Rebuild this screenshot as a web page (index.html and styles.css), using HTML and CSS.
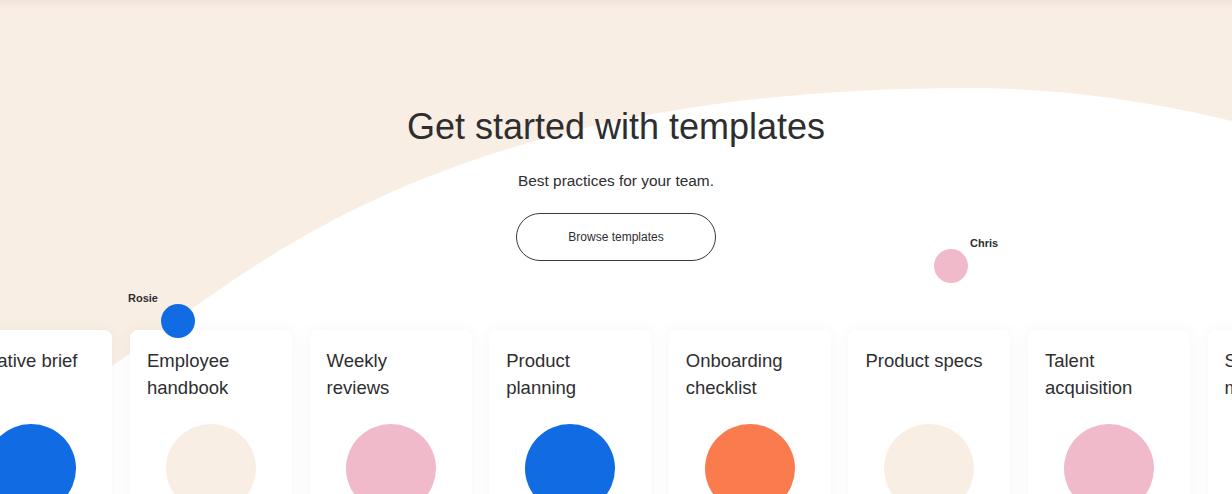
FILE: index.html
```html
<!DOCTYPE html>
<html lang="en">
<head>
<meta charset="utf-8">
<title>Get started with templates</title>
<link rel="stylesheet" href="styles.css">
</head>
<body>
<section class="templates">
  <svg class="backdrop" width="1232" height="494" viewBox="0 0 1232 494" preserveAspectRatio="none" aria-hidden="true">
    <rect x="0" y="0" width="1232" height="494" fill="#f9eee4"/>
    <path d="M0,438 L110,367 C235,286 420,88 970,88 C1080,88 1180,108 1232,121 L1232,494 L0,494 Z" fill="#ffffff"/>
  </svg>
  <div class="topshade"></div>

  <div class="hero">
    <h1 class="hero-title">Get started with templates</h1>
    <p class="hero-sub">Best practices for your team.</p>
    <button class="hero-btn" type="button">Browse templates</button>
  </div>

  <div class="cursor cursor-rosie">
    <span class="cursor-name">Rosie</span>
    <span class="cursor-dot dot-blue"></span>
  </div>
  <div class="cursor cursor-chris">
    <span class="cursor-dot dot-pink"></span>
    <span class="cursor-name">Chris</span>
  </div>

  <div class="cards">
    <div class="card"><div class="card-title">Creative brief</div><div class="card-art blue"></div></div>
    <div class="card"><div class="card-title">Employee handbook</div><div class="card-art beige"></div></div>
    <div class="card"><div class="card-title">Weekly reviews</div><div class="card-art pink"></div></div>
    <div class="card"><div class="card-title">Product planning</div><div class="card-art blue"></div></div>
    <div class="card"><div class="card-title">Onboarding checklist</div><div class="card-art orange"></div></div>
    <div class="card"><div class="card-title">Product specs</div><div class="card-art beige"></div></div>
    <div class="card"><div class="card-title">Talent acquisition</div><div class="card-art pink"></div></div>
    <div class="card"><div class="card-title">Sprint management</div><div class="card-art orange"></div></div>
  </div>
</section>
</body>
</html>
```

FILE: styles.css
```css
html, body {
  margin: 0;
  padding: 0;
  background: #ffffff;
  overflow: hidden;
}

body {
  font-family: "Liberation Sans", Arial, Helvetica, sans-serif;
  color: #2e2e30;
}

.templates {
  position: relative;
  width: 1232px;
  height: 494px;
  overflow: hidden;
}

.backdrop {
  position: absolute;
  left: 0;
  top: 0;
  z-index: 0;
}

.topshade {
  position: absolute;
  left: 0;
  top: 0;
  width: 100%;
  height: 9px;
  background: linear-gradient(to bottom, rgba(120, 90, 60, 0.06), rgba(120, 90, 60, 0));
  z-index: 1;
}

.hero {
  position: relative;
  z-index: 2;
  display: flex;
  flex-direction: column;
  align-items: center;
  padding-top: 105px;
}

.hero-title {
  margin: 0;
  font-size: 36px;
  line-height: 44px;
  font-weight: 400;
  color: #2e2e30;
  letter-spacing: 0;
}

.hero-sub {
  margin: 22px 0 0;
  font-size: 15.4px;
  line-height: 20px;
  color: #2e2e30;
}

.hero-btn {
  margin-top: 22px;
  width: 200px;
  height: 48px;
  border: 1px solid #3a3a3c;
  border-radius: 24px;
  background: #ffffff;
  font-family: "Liberation Sans", Arial, Helvetica, sans-serif;
  font-size: 12px;
  color: #2e2e30;
  padding: 0;
  cursor: pointer;
}

.cursor {
  position: absolute;
  z-index: 4;
  display: flex;
}

.cursor-name {
  font-size: 11px;
  font-weight: 700;
  line-height: 13px;
  color: #2e2e30;
}

.cursor-dot {
  width: 34px;
  height: 34px;
  border-radius: 50%;
}

.cursor-rosie {
  left: 128px;
  top: 292px;
  align-items: flex-start;
}

.cursor-rosie .cursor-dot {
  margin-top: 12px;
  margin-left: 3px;
}

.cursor-chris {
  left: 934px;
  top: 237px;
  align-items: flex-start;
}

.cursor-chris .cursor-dot {
  margin-top: 12px;
  margin-right: 2px;
}

.dot-blue { background: #116be2; }
.dot-pink { background: #f0bacb; }

.cards {
  position: relative;
  z-index: 3;
  display: flex;
  gap: 17.6px;
  margin-top: 69px;
  margin-left: -49.6px;
}

.card {
  flex: 0 0 162px;
  height: 200px;
  box-sizing: border-box;
  padding: 17px;
  background: #ffffff;
  border-radius: 8px;
  box-shadow: 0 0 18px rgba(0, 0, 0, 0.045);
  display: flex;
  flex-direction: column;
}

.card-title {
  height: 54px;
  font-size: 18.5px;
  line-height: 27px;
  color: #2e2e30;
}

.card-art {
  align-self: center;
  width: 90px;
  height: 90px;
  margin-top: 23px;
  border-radius: 50%;
}

.card-art.blue { background: #116be2; }
.card-art.beige { background: #f9eee4; }
.card-art.pink { background: #f0bacb; }
.card-art.orange { background: #f97b4e; }
```
